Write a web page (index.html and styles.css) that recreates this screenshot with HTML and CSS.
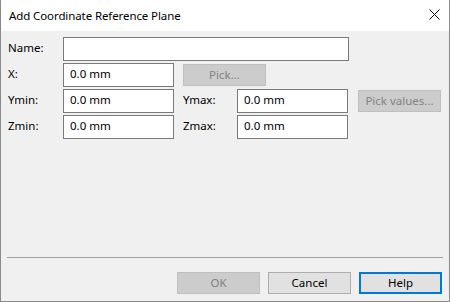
FILE: index.html
```html
<!DOCTYPE html>
<html lang="en">
<head>
    <meta charset="UTF-8">
    <title>Add Coordinate Reference Plane</title>
    <link rel="stylesheet" href="styles.css">
</head>
<body>
    <div class="dialog">
        <!-- Title bar -->
        <div class="titlebar">
            <span class="title">Add Coordinate Reference Plane</span>
            <span class="close-btn">
                <svg width="11" height="11" viewBox="0 0 11 11">
                    <path d="M0.5 0.5 L10.5 10.5 M10.5 0.5 L0.5 10.5" stroke="#000" stroke-width="1" fill="none"/>
                </svg>
            </span>
        </div>

        <!-- Form fields -->
        <div class="content">
            <form class="plane-form">
                <label class="field-label">Name:</label>
                <input type="text" class="field name-field" value="">

                <label class="field-label">X:</label>
                <input type="text" class="field" value="0.0 mm">
                <button type="button" class="btn btn-disabled pick-btn" disabled>Pick...</button>

                <label class="field-label">Ymin:</label>
                <input type="text" class="field" value="0.0 mm">
                <label class="field-label col-label">Ymax:</label>
                <input type="text" class="field col-field" value="0.0 mm">
                <button type="button" class="btn btn-disabled pick-values-btn" disabled>Pick values...</button>

                <label class="field-label">Zmin:</label>
                <input type="text" class="field" value="0.0 mm">
                <label class="field-label col-label">Zmax:</label>
                <input type="text" class="field col-field" value="0.0 mm">
            </form>
        </div>

        <!-- Footer buttons -->
        <div class="footer">
            <div class="separator"></div>
            <div class="button-row">
                <button type="button" class="btn btn-disabled" disabled>OK</button>
                <button type="button" class="btn">Cancel</button>
                <button type="button" class="btn btn-default">Help</button>
            </div>
        </div>
    </div>
</body>
</html>
```

FILE: styles.css
```css
body {
    margin: 0; /* Remove default margin */
    font-family: "Segoe UI", "Noto Sans", sans-serif;
    font-size: 11.5px;
    color: #000;
}

.dialog {
    width: 450px;
    height: 302px;
    box-sizing: border-box;
    display: flex;
    flex-direction: column;
    background-color: #f0f0f0;
    border: 1px solid #8a8a8a;
    border-top: none; /* Title bar has no top border */
}

.titlebar {
    height: 31px;
    flex-shrink: 0;
    background-color: #fff;
    display: flex;
    align-items: center;
    justify-content: space-between;
    padding: 0 9px 0 8px;
}

.title {
    font-size: 11.5px;
    letter-spacing: -0.1px;
    padding-bottom: 1px;
}

.close-btn {
    display: flex;
    padding-bottom: 2px;
}

.content {
    flex: 1;
    padding: 6px 0 0 7px;
}

/* Grid of labels, inputs and pick buttons */
.plane-form {
    display: grid;
    grid-template-columns: 55px 111px 9px 54px 112px 9px 83px;
    grid-auto-rows: 24px;
    row-gap: 2px;
}

.field-label {
    grid-column: 1;
    align-self: center;
    padding-bottom: 3px;
}

.col-label {
    grid-column: 4;
}

.field {
    grid-column: 2;
    box-sizing: border-box;
    height: 24px;
    margin: 0;
    padding: 0 6px 3px;
    border: 1px solid #7a7a7a;
    background-color: #fff;
    font-family: inherit;
    font-size: 11.5px;
    color: #000;
    outline: none;
}

.name-field {
    grid-column: 2 / 6;
}

.col-field {
    grid-column: 5;
    width: 111px;
}

.btn {
    box-sizing: border-box;
    width: 83px;
    height: 22px;
    margin: 0;
    padding: 0 0 2px;
    background-color: #e1e1e1;
    border: 1px solid #adadad;
    font-family: inherit;
    font-size: 11.5px;
    color: #000;
}

.btn-disabled {
    background-color: #cccccc;
    border-color: #bfbfbf;
    color: #838383;
}

.btn-default {
    border: 2px solid #0078d7;
}

.pick-btn {
    grid-column: 4 / 6;
    align-self: center;
}

.pick-values-btn {
    grid-column: 7;
    align-self: center;
}

.footer {
    flex-shrink: 0;
}

.separator {
    height: 1px;
    margin: 0 6px;
    background-color: #a0a0a0;
}

.button-row {
    display: flex;
    justify-content: flex-end;
    gap: 8px;
    padding: 14px 7px 7px 0;
}
```
